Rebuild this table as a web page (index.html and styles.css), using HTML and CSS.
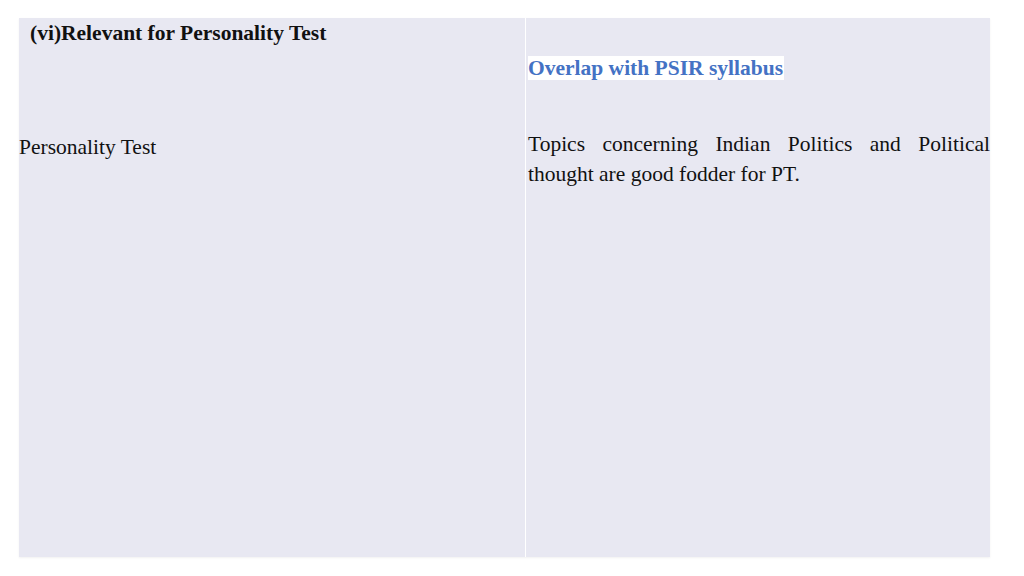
FILE: index.html
```html
<!DOCTYPE html>
<html>
<head>
<meta charset="utf-8">
<link rel="stylesheet" href="styles.css">
</head>
<body>
<div class="panel">
  <div class="cell left">
    <div class="heading">(vi)Relevant for Personality Test</div>
    <div class="label">Personality Test</div>
  </div>
  <div class="cell right">
    <div class="title"><span class="hl">Overlap with PSIR syllabus</span></div>
    <p class="para">Topics concerning Indian Politics and Political thought are good fodder for PT.</p>
  </div>
</div>
</body>
</html>
```
FILE: styles.css
```css
html, body {
  margin: 0;
  padding: 0;
  background: #ffffff;
}
body {
  width: 1024px;
  height: 576px;
  font-family: "Liberation Serif", "Times New Roman", serif;
  color: #111111;
  padding-top: 18px;
  padding-left: 19px;
  box-sizing: border-box;
}
.panel {
  width: 971px;
  height: 539px;
  display: grid;
  grid-template-columns: 506px 1px 464px;
  background: #e8e8f2;
  box-shadow: 0 1px 2px rgba(0,0,0,0.06);
}
.panel::before {
  content: "";
  grid-column: 2;
  grid-row: 1;
  background: #ffffff;
}
.left { grid-column: 1; grid-row: 1; }
.right { grid-column: 3; grid-row: 1; padding-left: 2px; padding-right: 0; }
.heading {
  font-weight: bold;
  font-size: 21.5px;
  line-height: 28px;
  margin-left: 11px;
  margin-top: 1px;
}
.label {
  font-size: 21.5px;
  line-height: 28px;
  margin-top: 86px;
}
.title {
  font-size: 21.5px;
  font-weight: bold;
  line-height: 24px;
  margin-top: 38px;
  color: #4472c4;
}
.hl {
  background: #ffffff;
  padding: 0 1px 0 0;
}
.para {
  margin: 49px 0 0 0;
  font-size: 21.5px;
  line-height: 30px;
  text-align: justify;
}
```
